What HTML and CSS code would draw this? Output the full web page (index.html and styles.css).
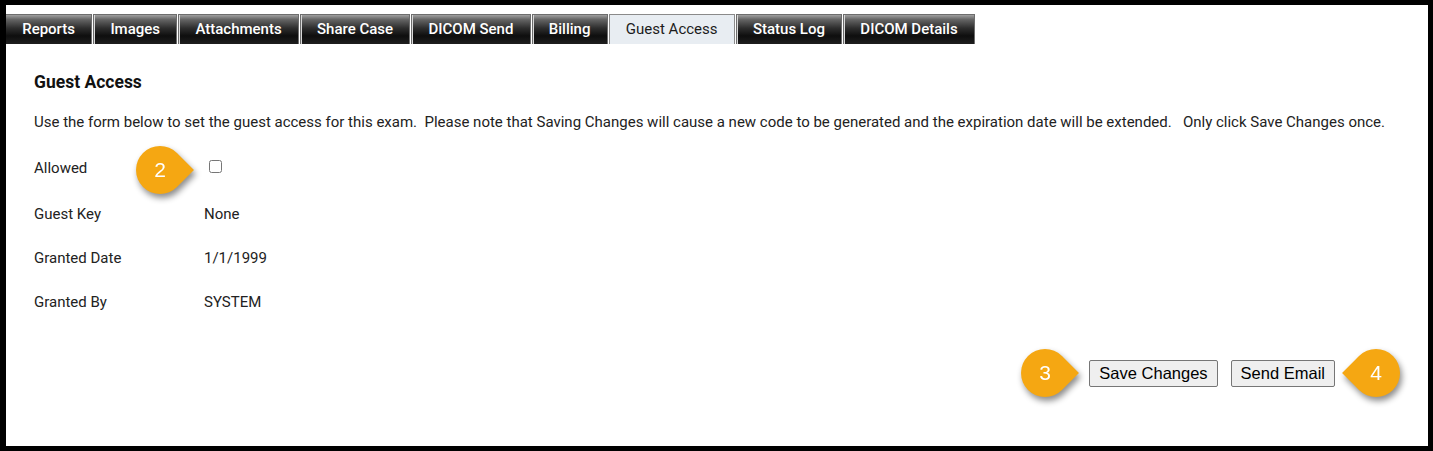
FILE: index.html
```html
<!DOCTYPE html>
<html>
<head>
<meta charset="utf-8">
<link rel="stylesheet" href="styles.css">
</head>
<body>
<div class="frame">
  <nav class="tabs">
    <div class="tab">Reports</div>
    <div class="tab">Images</div>
    <div class="tab">Attachments</div>
    <div class="tab">Share Case</div>
    <div class="tab">DICOM Send</div>
    <div class="tab">Billing</div>
    <div class="tab active">Guest Access</div>
    <div class="tab">Status Log</div>
    <div class="tab">DICOM Details</div>
  </nav>
  <main class="content">
    <h1 class="title">Guest Access</h1>
    <p class="intro">Use the form below to set the guest access for this exam.&nbsp; Please note that Saving Changes will cause a new code to be generated and the expiration date will be extended.&nbsp;&nbsp; Only click Save Changes once.</p>
    <div class="rows">
      <div class="row first">
        <span class="label">Allowed</span>
        <span class="value"><input type="checkbox" class="check"></span>
        <span class="callout c2"><span class="num">2</span></span>
      </div>
      <div class="row"><span class="label">Guest Key</span><span class="value">None</span></div>
      <div class="row"><span class="label">Granted Date</span><span class="value">1/1/1999</span></div>
      <div class="row"><span class="label">Granted By</span><span class="value">SYSTEM</span></div>
    </div>
    <div class="actions">
      <span class="callout c3"><span class="num">3</span></span>
      <button class="btn">Save Changes</button>
      <button class="btn">Send Email</button>
      <span class="callout c4"><span class="num">4</span></span>
    </div>
  </main>
</div>
</body>
</html>
```
FILE: styles.css
```css
html, body {
  margin: 0;
  padding: 0;
  background: #000;
}
.frame {
  box-sizing: border-box;
  width: 1433px;
  height: 451px;
  border-style: solid;
  border-color: #000;
  border-width: 5px 5px 5px 6px;
  background: #fff;
  padding-top: 9px;
  font-family: Roboto, "Liberation Sans", Arial, sans-serif;
  color: #1e1e1e;
  position: relative;
}
.tabs {
  display: flex;
  gap: 1px;
}
.tab {
  box-sizing: border-box;
  height: 30px;
  padding: 0 16.2px 1px 16.2px;
  display: flex;
  align-items: center;
  border: 1px solid #6d6d6d;
  border-bottom: none;
  background: linear-gradient(to bottom, #a0a0a0 0%, #666 15%, #2e2e2e 45%, #0e0e0e 72%, #1e1e1e 100%);
  color: #fff;
  font-size: 15px;
  font-weight: 500;
  box-shadow: inset 1px 0 0 #d8d8d8;
}
.tab:first-child { box-shadow: none; border-left: none; }
.tab.active {
  background: #e8edf2;
  color: #1c1c1c;
  font-weight: 400;
  border-color: #8a8a8a;
  box-shadow: none;
}
.content {
  padding: 0 28px;
}
.title {
  margin: 27px 0 0 0;
  font-size: 17.5px;
  font-weight: 700;
  color: #111;
  line-height: 22px;
}
.intro {
  margin: 19px 0 0 0;
  font-size: 15px;
  line-height: 20px;
  color: #222;
}
.rows {
  margin-top: 26px;
}
.row {
  position: relative;
  display: flex;
  align-items: center;
  height: 20px;
  margin-bottom: 24px;
  font-size: 15px;
  color: #222;
}
.row.first {
  margin-bottom: 26px;
}
.label {
  width: 170px;
  flex: none;
}
.value {
  display: flex;
  align-items: center;
}
.check {
  margin: 0 0 0 5px;
  width: 13px;
  height: 13px;
  position: relative;
  top: -2px;
}
.actions {
  position: relative;
  display: flex;
  justify-content: flex-end;
  gap: 13px;
  margin-top: 48px;
  padding-right: 65px;
}
.btn {
  font-family: "Liberation Sans", Arial, sans-serif;
  font-size: 16.5px;
  height: 27px;
  padding: 0 9px;
  background: #efefef;
  border: 1px solid #767676;
  border-radius: 2px;
  color: #000;
}
.callout {
  position: absolute;
  width: 48px;
  height: 48px;
  display: block;
  filter: drop-shadow(2px 4px 3px rgba(0,0,0,0.45));
}
.callout::before {
  content: "";
  position: absolute;
  left: 0;
  top: 0;
  width: 48px;
  height: 48px;
  background: #f5a712;
  border-radius: 50% 0 50% 50%;
  transform: rotate(45deg);
}
.callout .num {
  position: relative;
  display: flex;
  width: 48px;
  height: 48px;
  align-items: center;
  justify-content: center;
  color: #fff;
  font-family: "Liberation Sans", Arial, sans-serif;
  font-size: 21px;
}
.c2 {
  left: 102px;
  top: -12px;
}
.c3 {
  right: 331px;
  top: -11px;
}
.c4 {
  right: 0px;
  top: -11px;
}
.c4::before {
  border-radius: 50% 50% 50% 0;
}
```
